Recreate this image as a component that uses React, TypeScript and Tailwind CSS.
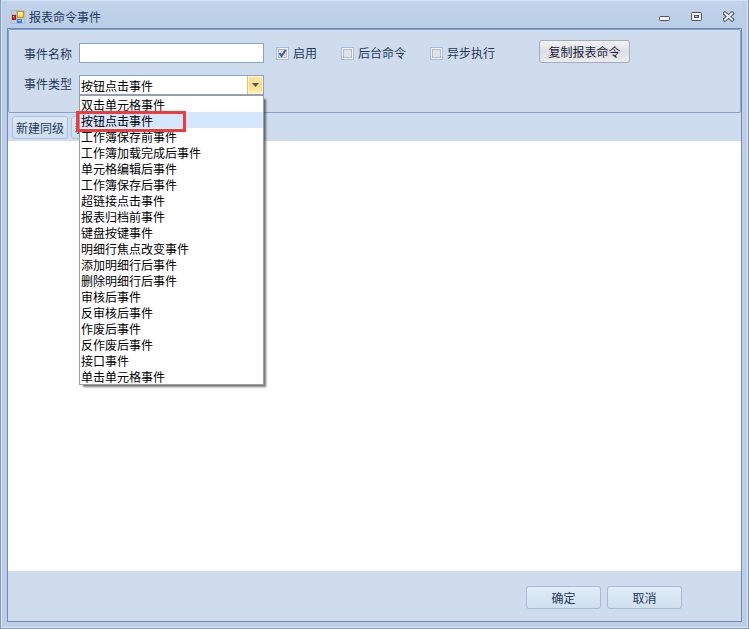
import React, { useState } from "react";

const EVENT_TYPES = [
  "双击单元格事件",
  "按钮点击事件",
  "工作簿保存前事件",
  "工作簿加载完成后事件",
  "单元格编辑后事件",
  "工作簿保存后事件",
  "超链接点击事件",
  "报表归档前事件",
  "键盘按键事件",
  "明细行焦点改变事件",
  "添加明细行后事件",
  "删除明细行后事件",
  "审核后事件",
  "反审核后事件",
  "作废后事件",
  "反作废后事件",
  "接口事件",
  "单击单元格事件"
];

interface CheckFieldProps {
  id: string;
  label: string;
  defaultChecked?: boolean;
}

const CheckField: React.FC<CheckFieldProps> = ({ id, label, defaultChecked }) => {
  return (
    <label htmlFor={id} className="flex h-5 items-center gap-1 whitespace-nowrap">
      <span className="relative flex">
        <input
          id={id}
          type="checkbox"
          defaultChecked={defaultChecked}
          className="peer size-[13px] appearance-none border border-[#a3bde3] bg-[#dfe2e8] shadow-[inset_0_0_0_1px_#f4f6fa,inset_0_0_0_2px_#b5bac6]"
        />
        <svg
          viewBox="0 0 13 13"
          className="pointer-events-none absolute inset-0 hidden size-[13px] peer-checked:block"
        >
          <path d="M3.5 6.2 L5.6 9 L9.6 3" fill="none" stroke="#3f61a0" strokeWidth="2" />
        </svg>
      </span>
      {label}
    </label>
  );
};

const AppIcon = () => (
  <svg viewBox="0 0 14 14" className="size-[14px]" shapeRendering="crispEdges">
    <path d="M.5 .5h5v13h-5zM.5 4.5h5M5.5 13.5h8v-13M5.5 .5h8" fill="none" stroke="#b3bac8" />
    <rect x="1" y="5" width="4" height="5" fill="#d8382a" />
    <path d="M1.5 5.5h3v4h-3z" fill="none" stroke="#a51b14" />
    <rect x="2" y="6" width="1" height="1" fill="#f4a090" />
    <rect x="6" y="1" width="7" height="7" fill="#fbd64c" />
    <rect x="7" y="2" width="4" height="3" fill="#fff0a8" />
    <path d="M6.5 1.5h6v6h-6z" fill="none" stroke="#c9921a" />
    <rect x="6" y="9" width="5" height="4" fill="#3f78dc" />
    <rect x="7" y="10" width="3" height="1" fill="#a5c8ff" />
  </svg>
);

const WindowButtons = () => (
  <div className="flex gap-5">
    <button type="button" aria-label="最小化">
      <svg viewBox="0 0 12 12" className="size-3">
        <rect x=".5" y="5.5" width="10" height="4" rx="1" fill="#f5f9ff" stroke="#4a5468" />
      </svg>
    </button>
    <button type="button" aria-label="最大化">
      <svg viewBox="0 0 12 12" className="size-3">
        <rect x=".5" y="1.5" width="10" height="8" rx="1" fill="#f5f9ff" stroke="#4a5468" />
        <rect x="3.5" y="4.5" width="4" height="2" fill="#a9bedb" stroke="#4a5468" />
      </svg>
    </button>
    <button type="button" aria-label="关闭">
      <svg viewBox="0 0 12 12" className="size-3">
        <path d="M2 2.5L9 8.5M9 2.5L2 8.5" stroke="#4a5468" strokeWidth="4" strokeLinecap="square" />
        <path d="M2 2.5L9 8.5M9 2.5L2 8.5" stroke="#f5f9ff" strokeWidth="2" strokeLinecap="square" />
      </svg>
    </button>
  </div>
);

const EventTypeField = () => {
  const [selected, setSelected] = useState("按钮点击事件");

  return (
    <div className="relative w-[185px]">
      <select
        id="eventType"
        value={selected}
        onChange={(e) => setSelected(e.target.value)}
        className="block h-5 w-full appearance-none border border-[#8aa3c6] bg-white pl-px pr-5 pt-px text-black outline-none"
      >
        {EVENT_TYPES.map((type) => (
          <option key={type}>{type}</option>
        ))}
      </select>
      <span className="pointer-events-none absolute inset-y-px right-px flex w-4 items-center justify-center border-l border-[#e6c25c] bg-linear-to-b from-[#fbe9ab] via-[#f6dc80] to-[#fdf3b8] shadow-[inset_0_0_0_1px_#fdf4cf]">
        <svg viewBox="0 0 7 4" className="h-1 w-[7px]">
          <path d="M0 0h7L3.5 4z" fill="#44577d" />
        </svg>
      </span>
      <ul
        role="listbox"
        aria-label="事件类型"
        className="absolute inset-x-0 top-full z-10 border border-[#9a9da3] bg-white text-black shadow-[3px_3px_2px_-1px_rgba(0,0,0,0.55)]"
      >
        {EVENT_TYPES.map((type) => (
          <li
            key={type}
            role="option"
            aria-selected={type === selected}
            onClick={() => setSelected(type)}
            className={
              type === selected
                ? "relative h-4 bg-[#d5e6ff] pl-px leading-[18px]"
                : "h-4 pl-px leading-[18px]"
            }
          >
            {type}
            {type === selected && (
              <span className="pointer-events-none absolute -left-1 -top-px z-10 h-[21px] w-[110px] border-3 border-[#f33a3a]" />
            )}
          </li>
        ))}
      </ul>
    </div>
  );
};

const toolButton =
  "h-[23px] whitespace-nowrap rounded-[3px] border border-[#adc1df] bg-linear-to-b from-[#dce8f6] to-[#cddded] px-[3px] pt-px";
const footerButton =
  "h-[23px] w-[75px] rounded-[3px] border border-[#a9b9d6] bg-linear-to-b from-[#e0edfa] to-[#cfdfee]";

export default function App() {
  return (
    <div className="flex min-h-screen flex-col border border-t-0 border-[#8b9ab0] bg-[#bdcfe8] font-['Noto_Sans_CJK_SC',sans-serif] text-xs leading-4 text-[#1e395b]">
      <div className="flex flex-1 flex-col border border-[#d3e4f6] px-[5px] pb-[5px]">
        <header className="flex h-[27px] items-center justify-between bg-linear-to-b from-[#c3d4eb] to-[#b9cde6] pl-1 pr-[7px] pt-1">
          <div className="flex items-center gap-1">
            <AppIcon />
            <h1>报表命令事件</h1>
          </div>
          <WindowButtons />
        </header>

        <main className="flex flex-1 flex-col border border-[#718bae] bg-[#cfdced]">
          <form className="flex flex-col gap-3 rounded-xs border border-[#83a1ca] pb-[17px] pl-[15px] pt-2.5">
            <div className="flex items-end">
              <label htmlFor="eventName" className="w-[55px] shrink-0 leading-[18px]">
                事件名称
              </label>
              <input
                id="eventName"
                type="text"
                className="h-5 w-[185px] border border-[#8aa3c6] bg-white px-0.5 text-black outline-none"
              />
              <div className="ml-3 flex gap-6">
                <CheckField id="enabled" label="启用" defaultChecked />
                <CheckField id="background" label="后台命令" />
                <CheckField id="async" label="异步执行" />
              </div>
              <button
                type="button"
                className="ml-11 h-[23px] w-[91px] rounded-[3px] border border-[#a7abb8] bg-linear-to-b from-[#f3f3f6] via-[#dedfe5] to-[#ececf0] text-[#1e1e3b]"
              >
                复制报表命令
              </button>
            </div>
            <div className="flex">
              <label htmlFor="eventType" className="w-[55px] shrink-0 leading-[18px]">
                事件类型
              </label>
              <EventTypeField />
            </div>
          </form>

          <div className="flex h-7 items-center gap-[3px] pl-1">
            <button type="button" className={toolButton}>
              新建同级
            </button>
            <button type="button" className={toolButton}>
              新建下级
            </button>
          </div>

          <section className="flex-1 bg-white" />

          <footer className="flex h-[50px] items-center justify-end gap-1.5 pr-[59px] pt-[3px]">
            <button type="button" className={footerButton}>
              确定
            </button>
            <button type="button" className={footerButton}>
              取消
            </button>
          </footer>
        </main>
      </div>
    </div>
  );
}
